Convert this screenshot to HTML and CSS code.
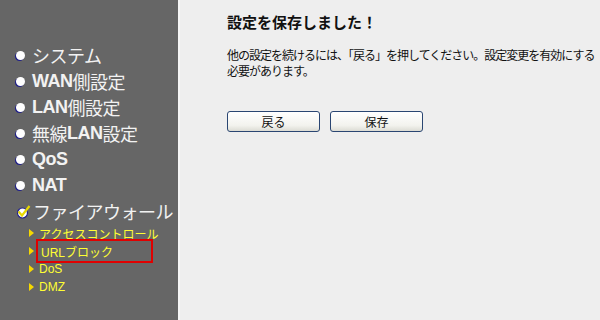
FILE: index.html
```html
<!DOCTYPE html>
<html lang="ja">
  <head>
    <meta charset="UTF-8" />
    <title>設定を保存しました</title>
    <link rel="stylesheet" href="styles.css">
  </head>
  <body>
    <div class="page">
      <div class="menu">
        <ul class="top">
          <li><span class="dot"></span>システム</li>
          <li><span class="dot"></span><b>WAN</b>側設定</li>
          <li><span class="dot"></span><b>LAN</b>側設定</li>
          <li><span class="dot"></span>無線<b>LAN</b>設定</li>
          <li><span class="dot"></span><b>QoS</b></li>
          <li><span class="dot"></span><b>NAT</b></li>
          <li>
            <svg class="check" width="15" height="15" viewBox="0 0 15 15">
              <circle cx="6.5" cy="9" r="5" fill="#fff" stroke="#23238c" stroke-width="1.2"/>
              <path d="M2.5 7.5 L6 11.5 L13.5 2" fill="none" stroke="#e8d800" stroke-width="2.2"/>
            </svg>ファイアウォール
          </li>
        </ul>
        <ul class="sub">
          <li><span class="arrow"></span>アクセスコントロール</li>
          <li class="current"><span class="arrow"></span><span class="box">URLブロック</span></li>
          <li><span class="arrow"></span>DoS</li>
          <li><span class="arrow"></span>DMZ</li>
        </ul>
      </div>
      <div class="content">
        <h1>設定を保存しました！</h1>
        <p>他の設定を続けるには、「戻る」を押してください。設定変更を有効にする<br>必要があります。</p>
        <div class="buttons">
          <button>戻る</button>
          <button>保存</button>
        </div>
      </div>
    </div>
  </body>
</html>
```

FILE: styles.css
```css
body {
  margin: 0;
  background: #eeeeee;
  font-family: "Liberation Sans", "Noto Sans CJK JP", sans-serif;
  overflow: hidden;
}

.page {
  display: flex;
  height: 320px;
}

.menu {
  width: 180px;
  flex: none;
  background: #666666;
  border-right: 2px solid #f6f6f6;
  padding-top: 42px;
  box-sizing: border-box;
}

ul {
  list-style: none;
  margin: 0;
  padding: 0;
}

.top li {
  display: flex;
  align-items: center;
  height: 26px;
  padding-left: 16px;
  color: #f2f2f2;
  font-size: 18px;
  letter-spacing: -0.5px;
}

.top b {
  font-weight: 600;
}

.dot {
  width: 9px;
  height: 9px;
  margin-right: 7px;
  border-radius: 50%;
  background: #ffffff;
  box-shadow: -1px 1px 0 #20208a;
}

.check {
  margin-right: 2px;
}

.sub li {
  display: flex;
  align-items: center;
  height: 18px;
  padding-left: 29px;
  color: #ffff33;
  font-size: 12px;
}

.arrow {
  width: 0;
  height: 0;
  margin-right: 5px;
  border-top: 4px solid transparent;
  border-bottom: 4px solid transparent;
  border-left: 5px solid #f5d800;
}

.box {
  margin-left: -3px;
  padding: 2px 38px 1px 3px;
  border: 2px solid #e00000;
}

.content {
  flex: 1;
  min-width: 0;
  overflow: hidden;
  padding-left: 47px;
}

h1 {
  margin: 11px 0 0;
  font-size: 15px;
  font-weight: bold;
  color: #111111;
}

p {
  margin: 16px 0 0;
  font-size: 12px;
  line-height: 16px;
  letter-spacing: -1px;
  color: #111111;
  white-space: nowrap;
}

.buttons {
  display: flex;
  gap: 10px;
  margin-top: 31px;
}

button {
  width: 93px;
  height: 21px;
  padding: 0;
  font-family: inherit;
  font-size: 12px;
  color: #111111;
  border: 1px solid #2a4672;
  border-radius: 3px;
  background: linear-gradient(#ffffff, #f3f3ee 70%, #dcdcd4);
}
```
